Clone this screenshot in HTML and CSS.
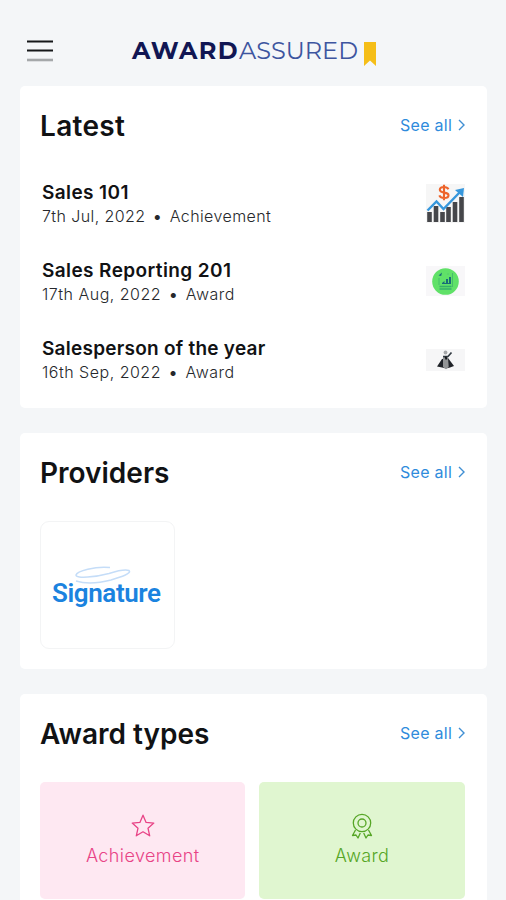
FILE: index.html
```html
<!DOCTYPE html>
<html lang="en">
<head>
<meta charset="utf-8">
<title>Award Assured</title>
<link rel="stylesheet" href="styles.css">
</head>
<body>
<header class="topbar">
  <svg class="menu" width="26" height="22" viewBox="0 0 26 22"><path d="M0 1.500h26M0 10.500h26" stroke="#151719" stroke-width="1.800"/><path d="M0 20h26" stroke="#a5a8aa" stroke-width="2.600"/></svg>
  <div class="brand"><span class="brand-bold">AWARD</span><span class="brand-light">ASSURED</span></div>
  <svg class="ribbon" width="12" height="24" viewBox="0 0 12 24"><path d="M0 0h12v24l-6-5.500L0 24z" fill="#f5be18"/></svg>
</header>
<main>
  <section class="card latest">
    <div class="head"><h2 class="t-latest">Latest</h2><a class="see">See all<svg width="7" height="12" viewBox="0 0 7 12"><path d="M1 1l5 5-5 5"/></svg></a></div>
    <ul class="list">
      <li class="row">
        <div class="info"><h3>Sales 101</h3><p>7th Jul, 2022 <b>•</b> Achievement</p></div>
        <svg width="39" height="39" viewBox="0 0 39 39"><rect width="39" height="39" fill="#f6f6f6"/><path d="M3.500 38V28M10 38V22M16.500 38V28M22.500 38V23M29 38V18M35.500 38V13" stroke="#45464a" stroke-width="4.600"/><path d="M1.500 26.500l9-9 7 7.500L34 8" fill="none" stroke="#3697dc" stroke-width="2.400"/><path d="M29 6l9-2-1 9z" fill="#3697dc"/><path d="M22.500 5.200C21.500 3.500 20 3 18 3c-2.500 0-4.200 1-4.200 2.800 0 4 8.700 1.700 8.700 5.400 0 1.900-1.800 2.800-4.300 2.800-2.400 0-4-.7-4.900-2.600M18 .8v15.400" fill="none" stroke="#ed642b" stroke-width="2.100"/></svg>
      </li>
      <li class="row">
        <div class="info"><h3>Sales Reporting 201</h3><p class="wide">17th Aug, 2022 <b>•</b> Award</p></div>
        <svg width="39" height="30" viewBox="0 0 39 30"><rect width="39" height="30" fill="#f8f7f9"/><circle cx="19.500" cy="15.500" r="13.300" fill="#60e168"/><path d="M12.500 9.500l3.500-3-.8 3.500zM16 17l2.500-2v2h1.500v-4h2v4h1v-6h2v7h-9z" fill="#176c79"/><path d="M13 12v7M21.500 8h1M26.500 7v14" stroke="#45bd6c" fill="none"/><path d="M13.500 20.500h12M13.500 23h12" stroke="#35b069" stroke-width="1.300"/></svg>
      </li>
      <li class="row">
        <div class="info"><h3 class="snug">Salesperson of the year</h3><p class="wide">16th Sep, 2022 <b>•</b> Award</p></div>
        <svg width="39" height="22" viewBox="0 0 39 22"><rect width="39" height="22" fill="#f6f6f7"/><path d="M16 10l-5 7.500 5 1 4 1 4-1 4-1.500-6-8z" fill="#202329"/><path d="M17 8h5l.7 10-2.700 2.300L17 18z" fill="#929496"/><circle cx="19.500" cy="3.500" r="1.900" fill="#a6a8aa"/><path d="M17 7.500h5l3.500-4" fill="none" stroke="#343c43" stroke-width="1.700"/><path d="M19.500 7.500l1 3" stroke="#14171b" stroke-width="2"/></svg>
      </li>
    </ul>
  </section>
  <section class="card providers">
    <div class="head"><h2>Providers</h2><a class="see">See all<svg width="7" height="12" viewBox="0 0 7 12"><path d="M1 1l5 5-5 5"/></svg></a></div>
    <div class="provider">
      <svg class="swirl" width="56" height="18" viewBox="0 0 56 18" fill="none" stroke="#c5ddf8" stroke-width="1.500"><path d="M35 1.500C20 0 2 5 1 9c0 4 20 2 33-1.500C42 5 51 3.500 54 4.500c3 3-8 6.500-18 9.500-12 3-25 4-35 1"/></svg>
      <span class="signature">Signature</span>
    </div>
  </section>
  <section class="card types">
    <div class="head"><h2>Award types</h2><a class="see">See all<svg width="7" height="12" viewBox="0 0 7 12"><path d="M1 1l5 5-5 5"/></svg></a></div>
    <div class="tiles">
      <div class="tile pink"><svg width="24" height="26" viewBox="0 0 24 26"><path d="M12 2.200l3.100 7.200 7.700.7-5.800 5.100 1.700 7.600-6.700-4-6.700 4L7 15.200l-5.800-5.100 7.700-.7z"/></svg><span>Achievement</span></div>
      <div class="tile green"><svg width="24" height="26" viewBox="0 0 24 26"><circle cx="12" cy="10" r="8.700"/><circle cx="12" cy="10" r="4"/><path d="M5.500 17l-3 5.500 3.500-.5 2 3 2.300-5M18.500 17l3 5.500-3.500-.5-2 3-2.300-5"/></svg><span>Award</span></div>
    </div>
  </section>
</main>
</body>
</html>
```
FILE: styles.css
```css
* { box-sizing: border-box; }
body { margin: 0; height: 900px; overflow: hidden; background: #f4f6f8; color: #111214; font-family: Inter, "Liberation Sans", sans-serif; }
h2, h3, p, ul { margin: 0; padding: 0; }
svg { display: block; flex: none; }
.topbar { height: 86px; display: flex; align-items: flex-start; padding: 40px 0 0 27px; }
.brand { display: flex; width: 226px; margin: -4px 0 0 79px; font: 24px/30px Montserrat, Inter, sans-serif; }
.brand-bold { width: 107px; font-weight: 700; color: #111653; letter-spacing: 1.3px; }
.brand-light { font-weight: 400; color: #3d559f; letter-spacing: 0; }
.ribbon { margin: 2px 0 0 6px; }
main { display: flex; flex-direction: column; gap: 25px; padding-left: 20px; }
.card { width: 467px; background: #fff; border-radius: 5px; padding: 20px 22px 0 20px; }
.latest { height: 322px; }
.providers { height: 236px; }
.types { height: 240px; }
.head { display: flex; justify-content: space-between; align-items: center; height: 40px; }
h2 { font-size: 28px; line-height: 40px; font-weight: 600; }
.t-latest { letter-spacing: .3px; }
.see { display: flex; align-items: center; gap: 6px; height: 38px; margin-bottom: 2px; font-size: 16px; font-weight: 400; letter-spacing: .25px; color: #2f8bdc; }
.see path { fill: none; stroke: #408fd3; stroke-width: 1.4; }
.list { list-style: none; padding: 18px 0 0 2px; }
.row { height: 78.3px; display: flex; align-items: center; justify-content: space-between; }
.info { padding-top: 2px; }
h3 { font-size: 19px; line-height: 24px; font-weight: 600; letter-spacing: .4px; }
.snug { letter-spacing: .25px; }
p { font-size: 16px; line-height: 23px; font-weight: 300; letter-spacing: .4px; color: #26282c; white-space: nowrap; }
.wide { letter-spacing: .5px; }
p b { margin: 0 3px; font-weight: 600; }
.provider { width: 135px; height: 128px; margin-top: 28px; padding-top: 44px; border: 1px solid #f3f4f5; border-radius: 9px; }
.swirl { margin-left: 34px; }
.signature { display: block; margin: -8px 0 0 11px; font: 600 26px/34px Roboto, "Liberation Sans", sans-serif; letter-spacing: -.4px; color: #1b83df; white-space: nowrap; }
.tiles { display: flex; gap: 14px; margin-top: 28px; }
.tile { flex: 0 0 205.4px; height: 117px; border-radius: 5px; display: flex; flex-direction: column; align-items: center; padding-top: 31px; font-size: 18px; line-height: 28px; font-weight: 300; letter-spacing: .4px; }
.tile path, .tile circle { fill: none; stroke: currentColor; stroke-width: 1.3; stroke-linejoin: round; }
.tile span { margin-top: 3px; }
.pink { background: #fee8f2; color: #e84386; }
.green { background: #e0f6d0; color: #56a626; }
```
